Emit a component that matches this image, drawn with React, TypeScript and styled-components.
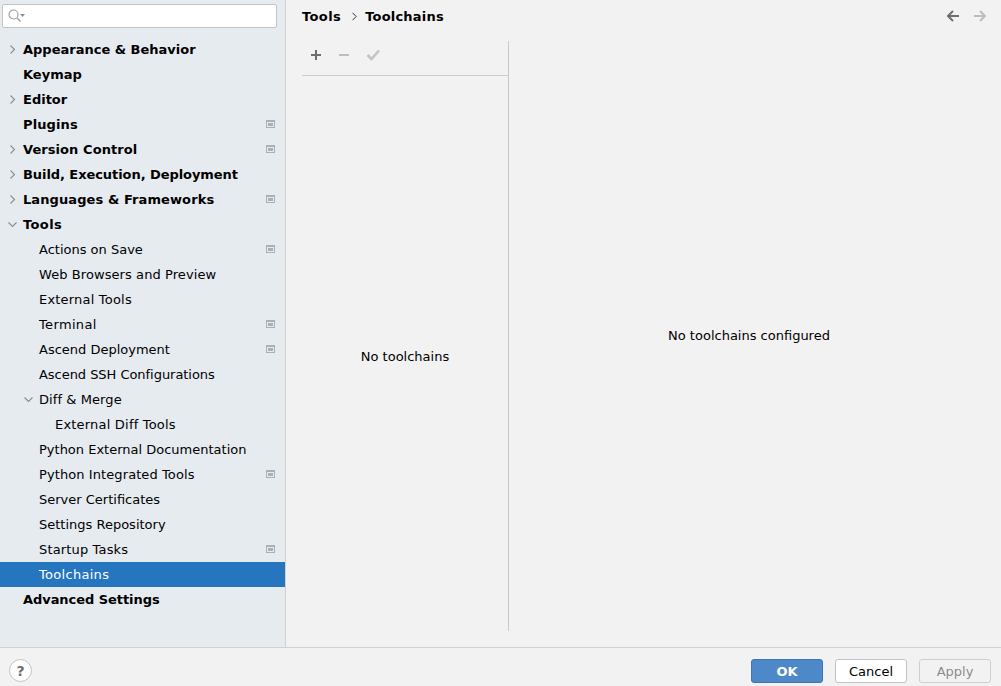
import styled, { createGlobalStyle } from 'styled-components'

const GlobalStyle = createGlobalStyle`
  html, body {
    margin: 0;
    padding: 0;
    height: 100%;
    overflow: hidden;
  }
  body {
    font-family: "DejaVu Sans", sans-serif;
    font-size: 13px;
    color: #000;
    background: #f2f2f2;
  }
`

const Dialog = styled.div`
  width: 1001px;
  height: 686px;
  display: flex;
  flex-direction: column;
`
const Body = styled.div`
  flex: 1;
  min-height: 0;
  display: flex;
`
const Sidebar = styled.aside`
  width: 285px;
  flex: none;
  background: #e6ebf0;
  border-right: 1px solid #d1d1d1;
  padding-top: 4px;
  display: flex;
  flex-direction: column;
`
const SearchBox = styled.div`
  width: 275px;
  height: 24px;
  box-sizing: border-box;
  margin-left: 2px;
  background: #fff;
  border: 1px solid #c4c4c4;
  border-radius: 2px;
  display: flex;
  align-items: center;
  padding-left: 4px;
  flex: none;
`
const Tree = styled.div`
  margin-top: 9px;
  display: flex;
  flex-direction: column;
`
const Row = styled.div<{ $level: number; $selected?: boolean }>`
  height: 25px;
  flex: none;
  position: relative;
  display: flex;
  align-items: center;
  padding-left: ${p => 23 + p.$level * 16}px;
  padding-right: 10px;
  background: ${p => (p.$selected ? '#2675bf' : 'transparent')};
  color: ${p => (p.$selected ? '#fff' : '#000')};
`
const RowLabel = styled.span<{ $bold?: boolean; $track?: number }>`
  flex: 1;
  white-space: nowrap;
  font-size: 13px;
  font-weight: ${p => (p.$bold ? 700 : 400)};
  letter-spacing: ${p => p.$track ?? 0}px;
`
const Arrow = styled.svg<{ $level: number }>`
  position: absolute;
  left: ${p => 7 + p.$level * 16}px;
  top: 7px;
  width: 11px;
  height: 11px;
`
const Main = styled.main`
  flex: 1;
  min-width: 0;
  display: flex;
  flex-direction: column;
  padding-left: 16px;
`
const Header = styled.header`
  height: 41px;
  flex: none;
  display: flex;
  align-items: flex-start;
  padding: 9px 14px 0 0;
  box-sizing: border-box;
`
const Crumb = styled.span<{ $track: number }>`
  font-size: 13px;
  font-weight: 700;
  line-height: 15px;
  letter-spacing: ${p => p.$track}px;
`
const CrumbArrow = styled.svg`
  width: 7px;
  height: 9px;
  margin: 3px 7px 0 10px;
`
const NavButtons = styled.div`
  margin-left: auto;
  display: flex;
  gap: 13px;
`
const Panels = styled.div`
  height: 590px;
  display: flex;
  flex: none;
`
const ListPanel = styled.section`
  width: 206px;
  flex: none;
  border-right: 1px solid #c9c9c9;
  display: flex;
  flex-direction: column;
`
const Toolbar = styled.div`
  height: 27px;
  flex: none;
  border-bottom: 1px solid #cdcdcd;
  display: flex;
  align-items: center;
  gap: 12px;
  padding: 0 0 7px 6px;
`
const EmptyList = styled.div`
  flex: 1;
  display: flex;
  align-items: center;
  justify-content: center;
  padding-top: 5px;
`
const EmptyDetail = styled.div`
  flex: 1;
  display: flex;
  align-items: center;
  justify-content: center;
  padding: 0 12px 2px 0;
`
const Footer = styled.footer`
  height: 39px;
  flex: none;
  border-top: 1px solid #d1d1d1;
  display: flex;
  align-items: flex-start;
  padding: 11px 10px 0 9px;
  box-sizing: border-box;
`
const HelpButton = styled.div`
  width: 23px;
  height: 23px;
  box-sizing: border-box;
  border: 1px solid #c4c4c4;
  border-radius: 50%;
  background: #fff;
  color: #6e6e6e;
  font-size: 14px;
  font-weight: 700;
  display: flex;
  align-items: center;
  justify-content: center;
`
const Buttons = styled.div`
  margin-left: auto;
  display: flex;
  gap: 12px;
`
const Button = styled.button<{ $kind?: 'primary' | 'disabled' }>`
  width: 72px;
  height: 24px;
  box-sizing: border-box;
  padding: 0;
  border-radius: 3px;
  font-family: "DejaVu Sans", sans-serif;
  font-size: 13px;
  font-weight: ${p => (p.$kind === 'primary' ? 700 : 400)};
  border: 1px solid ${p =>
    p.$kind === 'primary' ? '#3a76b3' : p.$kind === 'disabled' ? '#cfcfcf' : '#c4c4c4'};
  background: ${p =>
    p.$kind === 'primary' ? '#4d89c9' : p.$kind === 'disabled' ? '#f2f2f2' : '#fff'};
  color: ${p =>
    p.$kind === 'primary' ? '#fff' : p.$kind === 'disabled' ? '#8c8c8c' : '#000'};
`

const Chevron = ({ open, level }: { open?: boolean; level: number }) => (
  <Arrow $level={level} viewBox="0 0 11 11" fill="none" stroke="#8c8c8c" strokeWidth="1.1">
    {open ? <path d="M1.5 3.5 L5.5 7.5 L9.5 3.5" /> : <path d="M3.5 1.5 L7.5 5.5 L3.5 9.5" />}
  </Arrow>
)

const ProjectIcon = () => (
  <svg width="9" height="8" viewBox="0 0 9 8" style={{ flex: 'none', marginTop: -1 }}>
    <rect x="0" y="0" width="9" height="8" fill="#a8b0b8" />
    <rect x="1" y="2" width="7" height="5" fill="#e6ebf0" />
    <rect x="2" y="3" width="5" height="3" fill="#a8b0b8" />
  </svg>
)

interface Item {
  label: string
  level?: number
  bold?: boolean
  arrow?: 'open' | 'closed'
  project?: boolean
  selected?: boolean
  track?: number
}

const items: Item[] = [
  { label: 'Appearance & Behavior', bold: true, arrow: 'closed' },
  { label: 'Keymap', bold: true },
  { label: 'Editor', bold: true, arrow: 'closed' },
  { label: 'Plugins', bold: true, project: true, track: 0.12 },
  { label: 'Version Control', bold: true, arrow: 'closed', project: true, track: 0.07 },
  { label: 'Build, Execution, Deployment', bold: true, arrow: 'closed', track: -0.07 },
  { label: 'Languages & Frameworks', bold: true, arrow: 'closed', project: true, track: 0.09 },
  { label: 'Tools', bold: true, arrow: 'open', track: 0.4 },
  { label: 'Actions on Save', level: 1, project: true },
  { label: 'Web Browsers and Preview', level: 1, track: 0.08 },
  { label: 'External Tools', level: 1, track: 0.2 },
  { label: 'Terminal', level: 1, project: true, track: 0.35 },
  { label: 'Ascend Deployment', level: 1, project: true },
  { label: 'Ascend SSH Configurations', level: 1, track: -0.04 },
  { label: 'Diff & Merge', level: 1, arrow: 'open', track: 0.08 },
  { label: 'External Diff Tools', level: 2, track: 0.2 },
  { label: 'Python External Documentation', level: 1 },
  { label: 'Python Integrated Tools', level: 1, project: true, track: 0.09 },
  { label: 'Server Certificates', level: 1 },
  { label: 'Settings Repository', level: 1 },
  { label: 'Startup Tasks', level: 1, project: true, track: 0.15 },
  { label: 'Toolchains', level: 1, selected: true, track: 0.3 },
  { label: 'Advanced Settings', bold: true, track: -0.06 },
]

const App = () => {
  return (
    <Dialog>
      <GlobalStyle />
      <Body>
        <Sidebar>
          <SearchBox>
            <svg width="18" height="16" viewBox="0 0 18 16" fill="none">
              <circle cx="6.5" cy="6.5" r="4.5" stroke="#9a9a9a" strokeWidth="1.1" />
              <path d="M10 10 L13.5 13.5" stroke="#9a9a9a" strokeWidth="1.3" />
              <path d="M13 6 H18 L15.5 9 Z" fill="#8c8c8c" />
            </svg>
          </SearchBox>
          <Tree>
            {items.map(item => (
              <Row key={item.label} $level={item.level ?? 0} $selected={item.selected}>
                {item.arrow && <Chevron open={item.arrow === 'open'} level={item.level ?? 0} />}
                <RowLabel $bold={item.bold} $track={item.track}>{item.label}</RowLabel>
                {item.project && <ProjectIcon />}
              </Row>
            ))}
          </Tree>
        </Sidebar>
        <Main>
          <Header>
            <Crumb $track={0.4}>Tools</Crumb>
            <CrumbArrow viewBox="0 0 7 9" fill="none" stroke="#333" strokeWidth="1">
              <path d="M1.5 0.8 L5.2 4.5 L1.5 8.2" />
            </CrumbArrow>
            <Crumb $track={0.2}>Toolchains</Crumb>
            <NavButtons>
              <svg width="14" height="14" viewBox="0 0 14 14" fill="none" stroke="#6e6e6e" strokeWidth="2">
                <path d="M13 7 H2 M7 2 L2 7 L7 12" />
              </svg>
              <svg width="14" height="14" viewBox="0 0 14 14" fill="none" stroke="#bdbdbd" strokeWidth="2">
                <path d="M1 7 H12 M7 2 L12 7 L7 12" />
              </svg>
            </NavButtons>
          </Header>
          <Panels>
            <ListPanel>
              <Toolbar>
                <svg width="16" height="16" viewBox="0 0 16 16" fill="none" stroke="#6e6e6e" strokeWidth="2">
                  <path d="M8 3 V13 M3 8 H13" />
                </svg>
                <svg width="16" height="16" viewBox="0 0 16 16" fill="none" stroke="#bdbdbd" strokeWidth="2">
                  <path d="M3 8 H13" />
                </svg>
                <svg width="16" height="16" viewBox="0 0 16 16" fill="none" stroke="#c4c4c4" strokeWidth="2.6">
                  <path d="M3.5 8 L7.5 12 L15 3.5" />
                </svg>
              </Toolbar>
              <EmptyList>No toolchains</EmptyList>
            </ListPanel>
            <EmptyDetail>No toolchains configured</EmptyDetail>
          </Panels>
        </Main>
      </Body>
      <Footer>
        <HelpButton>?</HelpButton>
        <Buttons>
          <Button $kind="primary">OK</Button>
          <Button>Cancel</Button>
          <Button $kind="disabled">Apply</Button>
        </Buttons>
      </Footer>
    </Dialog>
  )
}

export default App
